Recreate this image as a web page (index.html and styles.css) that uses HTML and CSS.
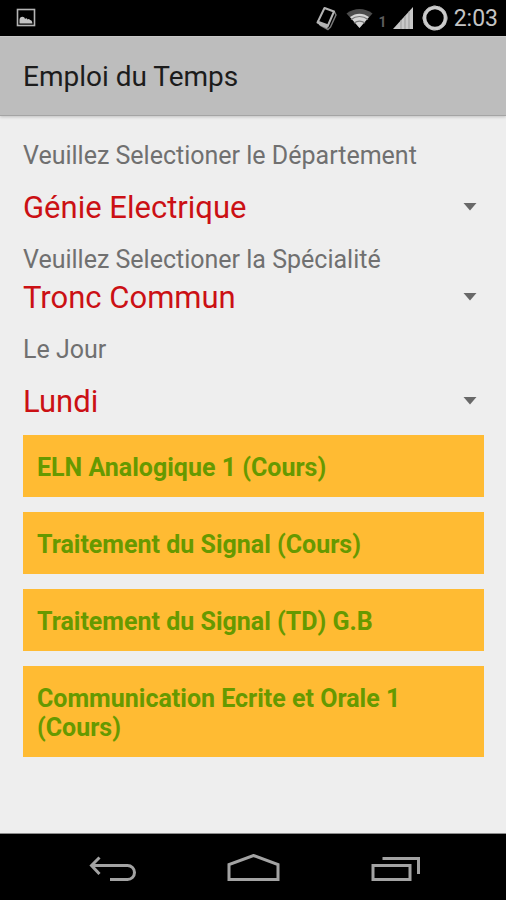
FILE: index.html
```html
<!DOCTYPE html>
<html lang="fr">
<head>
<meta charset="utf-8">
<meta name="viewport" content="width=device-width, initial-scale=1">
<title>Emploi du Temps</title>
<link rel="stylesheet" href="styles.css">
</head>
<body>
<div class="status">
  <svg class="status-picture" width="20" height="20" viewBox="0 0 20 20" aria-hidden="true">
    <rect x="1.500" y="1.500" width="17" height="16" fill="none" stroke="#b4b4b4" stroke-width="1.600"/>
    <path d="M3.500 15.500V12c0-4 5-4 5.500-1 1-1 2-1 2.500.5 1-1 2-.5 2.500.5 1.500 0 2 1 2.500 3.500z" fill="#c4c4c4"/>
  </svg>
  <svg width="22" height="26" viewBox="0 0 22 26" aria-hidden="true">
    <path d="M4 20l8 4.500 2.500-2.500L20 10l-2-4" fill="none" stroke="#777" stroke-width="1.500" stroke-linejoin="round"/>
    <path d="M8.500 3L18 6.500 11.500 21.500 1.500 17.500z" fill="none" stroke="#b4b4b4" stroke-width="2" stroke-linejoin="round"/>
    <path d="M1.500 15.500l11 4-1.500 4-8-3.500z" fill="#b4b4b4"/>
  </svg>
  <svg width="27" height="22" viewBox="0 0 27 22" aria-hidden="true">
    <path d="M.5 6.500C8 .5 19 .5 26.500 6.500L13.500 21z" fill="#4c4c4c"/>
    <path d="M4 10c6-4.500 13-4.500 19 0L13.500 21z" fill="#d4d4d4"/>
    <path d="M5 12.500c5-4 12-4 17 0M8 16c3.500-2.500 7.500-2.500 11 0" fill="none" stroke="#777" stroke-width="1.200"/>
  </svg>
  <span class="sim">1</span>
  <svg width="21" height="24" viewBox="0 0 21 24" aria-hidden="true">
    <path d="M0 23L20 1v22z" fill="#c8c8c8"/>
    <path d="M8 14v9M12 10v13M16 5.500v17.500" stroke="#999" stroke-width="1"/>
  </svg>
  <svg class="status-ring" width="26" height="26" viewBox="0 0 26 26" aria-hidden="true">
    <circle cx="13" cy="13" r="10.500" fill="none" stroke="#ccc" stroke-width="3.600"/>
    <circle cx="13" cy="13" r="12" fill="none" stroke="#aaa" stroke-width="1" stroke-dasharray="3 3"/>
  </svg>
  <time class="clock">2:03</time>
</div>

<header class="app-bar"><h1>Emploi du Temps</h1></header>

<main>
  <form class="filters">
    <label for="departement">Veuillez Selectioner le Département</label>
    <div class="spinner">
      <select id="departement"><option>Génie Electrique</option></select>
      <svg width="14" height="8" viewBox="0 0 14 8" aria-hidden="true"><path d="M.5 0h13L7 7.500z"/></svg>
    </div>
    <label for="specialite">Veuillez Selectioner la Spécialité</label>
    <div class="spinner spinner-tight">
      <select id="specialite"><option>Tronc Commun</option></select>
      <svg width="14" height="8" viewBox="0 0 14 8" aria-hidden="true"><path d="M.5 0h13L7 7.500z"/></svg>
    </div>
    <label for="jour">Le Jour</label>
    <div class="spinner">
      <select id="jour"><option>Lundi</option></select>
      <svg width="14" height="8" viewBox="0 0 14 8" aria-hidden="true"><path d="M.5 0h13L7 7.500z"/></svg>
    </div>
  </form>
  <ul class="courses">
    <li>ELN Analogique 1 (Cours)</li>
    <li>Traitement du Signal (Cours)</li>
    <li>Traitement du Signal (TD) G.B</li>
    <li>Communication Ecrite et Orale 1 (Cours)</li>
  </ul>
</main>

<nav class="nav-bar">
  <button type="button" aria-label="Retour">
    <svg width="48" height="30" viewBox="0 0 48 30" aria-hidden="true">
      <path d="M3 11.500H39.500a7 7 0 0 1 0 14H22M11.500 3.500L3.500 11.500l8 8.500"/>
    </svg>
  </button>
  <button type="button" aria-label="Accueil">
    <svg width="54" height="30" viewBox="0 0 54 30" aria-hidden="true">
      <path d="M2 25.500V10.500L26.500 1.500 51 10.500v15z"/>
    </svg>
  </button>
  <button type="button" aria-label="Applications récentes">
    <svg width="50" height="30" viewBox="0 0 50 30" aria-hidden="true">
      <path d="M2 11.500h37v14H2zM11.500 4.500h36V20"/>
    </svg>
  </button>
</nav>
</body>
</html>
```
FILE: styles.css
```css
* {
  box-sizing: border-box;
}

body {
  margin: 0;
  min-height: 100vh;
  display: flex;
  flex-direction: column;
  background: #eee;
  font-family: Roboto, "Liberation Sans", sans-serif;
}

.status {
  display: flex;
  align-items: center;
  height: 36px;
  padding: 0 8px 0 16px;
  gap: 8px;
  background: #000;
  color: #c4c4c4;
}

.status-picture {
  margin-right: auto;
}

.sim {
  margin: 8px -2px 0 -2px;
  font-size: 14px;
  line-height: 16px;
  font-weight: 700;
  color: #5c5c5c;
}

.status-ring {
  margin-right: -2px;
}

.clock {
  padding-top: 2px;
  font-size: 23px;
  line-height: 34px;
}

.app-bar {
  padding: 21px 23px 19px;
  background: #bdbdbd;
  border-top: 1px solid #c8c8c8;
  border-bottom: 1px solid #a4a4a4;
  box-shadow: 0 1px 3px #0003;
}

h1 {
  margin: 0;
  font-size: 28px;
  line-height: 38px;
  font-weight: 400;
  color: #1c1c1c;
}

main {
  flex: 1;
  padding: 25px 22px 24px 23px;
}

.filters label {
  display: block;
  font-size: 25px;
  line-height: 30px;
  color: #707070;
}

.spinner {
  display: grid;
  align-items: center;
  margin: 14px 0;
}

.spinner-tight {
  margin-top: 0;
}

.filters .spinner:last-child {
  margin-bottom: 10px;
}

.spinner select,
.spinner svg {
  grid-area: 1 / 1;
}

.spinner select {
  appearance: none;
  width: 100%;
  height: 46px;
  padding: 0 32px 0 0;
  border: 0;
  background: none;
  font: 400 31px/46px Roboto, "Liberation Sans", sans-serif;
  color: #cb1014;
}

.spinner svg {
  justify-self: end;
  margin: 0 7px 2px 0;
  fill: #686868;
  pointer-events: none;
}

.courses {
  display: grid;
  gap: 15px;
  margin: 0;
  padding: 0;
  list-style: none;
}

.courses li {
  padding: 18px 14px 15px;
  background: #ffbb33;
  font-size: 25px;
  line-height: 29px;
  font-weight: 700;
  color: #669900;
}

.nav-bar {
  display: flex;
  justify-content: center;
  gap: 58px;
  height: 67px;
  padding: 4px 0 0 2px;
  border-top: 1px solid #8c8c8c;
  background: #000;
}

.nav-bar button {
  display: grid;
  place-items: center;
  width: 84px;
  padding: 0;
  border: 0;
  background: none;
}

.nav-bar svg {
  fill: none;
  stroke: #a3a3a3;
  stroke-width: 3;
}
```
